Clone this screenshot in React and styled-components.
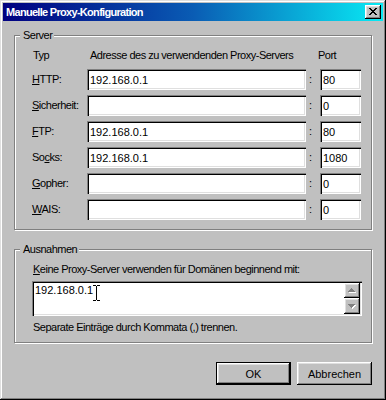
import React from "react";
import styled, { createGlobalStyle } from "styled-components";

const Global = createGlobalStyle`
  html, body { margin: 0; padding: 0; background: #c0c0c0; }
  body { font-family: "Liberation Sans", Arial, sans-serif; font-size: 11px; color: #000; letter-spacing: -0.5px; }
  * { box-sizing: border-box; }
`;

const raised = `
  box-shadow: inset -1px -1px #000, inset 1px 1px #fff, inset -2px -2px #808080, inset 2px 2px #dfdfdf;
`;

const Window = styled.div`
  width: 386px;
  height: 400px;
  padding: 3px;
  background: #c0c0c0;
  box-shadow: inset -1px -1px #000, inset 1px 1px #dfdfdf, inset -2px -2px #808080, inset 2px 2px #fff;
  display: flex;
  flex-direction: column;
`;

const TitleBar = styled.div`
  height: 18px;
  display: flex;
  align-items: center;
  justify-content: space-between;
  padding: 0 2px 0 3px;
  background: linear-gradient(90deg, #000080 0%, #0a5cb4 50%, #08eaf4 100%);
`;

const Title = styled.span`
  color: #fff;
  font-weight: bold;
  font-size: 11px;
  line-height: 13px;
  letter-spacing: -0.7px;
  white-space: nowrap;
`;

const CloseButton = styled.button`
  width: 16px;
  height: 14px;
  padding: 0 0 1px 0;
  border: none;
  background: #c0c0c0;
  display: flex;
  align-items: center;
  justify-content: center;
  ${raised}
`;

const Body = styled.div`
  padding: 14px 11px 0 11px;
  display: flex;
  flex-direction: column;
`;

const GroupBox = styled.div`
  position: relative;
  width: 358px;
  height: ${(p) => p.$h}px;
  border: 1px solid #808080;
  box-shadow: 1px 1px 0 #fff, inset 1px 1px 0 #fff;
  margin-top: ${(p) => p.$mt || 0}px;
`;

const Legend = styled.span`
  position: absolute;
  top: -7px;
  left: 5px;
  padding: 0 2px 0 3px;
  line-height: 13px;
  background: #c0c0c0;
  white-space: nowrap;
`;

const ServerGrid = styled.div`
  display: grid;
  grid-template-columns: 55px 219px 14px 41px;
  grid-template-rows: 16px repeat(6, 21px);
  row-gap: 5px;
  align-items: center;
  padding: 12px 0 0 17px;
`;

const Header = styled.span`
  align-self: start;
  line-height: 14px;
  white-space: nowrap;
  padding-left: ${(p) => p.$pl || 0}px;
  grid-column: ${(p) => p.$col || "auto"};
`;

const Label = styled.span`
  line-height: 13px;
  white-space: nowrap;
`;

const Colon = styled.span`
  padding-left: 3px;
  line-height: 13px;
`;

const Field = styled.input`
  width: 100%;
  height: 21px;
  border: none;
  outline: none;
  margin: 0;
  padding: 0 2px 0 3px;
  font: inherit;
  letter-spacing: normal;
  color: #000;
  background: #fff;
  box-shadow: inset 1px 1px #808080, inset 2px 2px #000, inset -1px -1px #fff, inset -2px -2px #dfdfdf;
`;

const ExceptBody = styled.div`
  padding: 13px 9px 0 17px;
  display: flex;
  flex-direction: column;
`;

const Text = styled.span`
  line-height: 13px;
  padding-left: 1px;
  margin-top: ${(p) => p.$mt || 0}px;
  white-space: nowrap;
`;

const TextBox = styled.div`
  position: relative;
  margin-top: 5px;
  height: 35px;
  display: flex;
  padding: 2px;
  background: #fff;
  box-shadow: inset 1px 1px #808080, inset 2px 2px #000, inset -1px -1px #fff, inset -2px -2px #dfdfdf;
`;

const TextContent = styled.div`
  flex: 1;
  padding: 1px 1px 0 1px;
  line-height: 13px;
  letter-spacing: normal;
`;

const ScrollBar = styled.div`
  width: 16px;
  display: flex;
  flex-direction: column;
`;

const ScrollButton = styled.div`
  height: ${(p) => p.$h}px;
  background: #c0c0c0;
  display: flex;
  align-items: center;
  justify-content: center;
  ${raised}
`;

const Cursor = styled.svg`
  position: absolute;
  left: 61px;
  top: 4px;
`;

const ButtonRow = styled.div`
  width: 358px;
  margin-top: 19px;
  display: flex;
  justify-content: flex-end;
  gap: 6px;
`;

const Button = styled.button`
  width: 75px;
  height: 23px;
  border: none;
  padding: 0;
  font: inherit;
  letter-spacing: normal;
  color: #000;
  background: #c0c0c0;
  ${(p) =>
    p.$default
      ? `box-shadow: inset 0 0 0 1px #000, inset -2px -2px #000, inset 2px 2px #fff, inset -3px -3px #808080, inset 3px 3px #dfdfdf;`
      : `box-shadow: inset -1px -1px #000, inset 1px 1px #fff, inset -2px -2px #808080, inset 2px 2px #dfdfdf;`}
`;

const XGlyph = () => (
  <svg width="8" height="7" viewBox="0 0 8 7" shapeRendering="crispEdges">
    <path
      fill="#000"
      d="M0 0h2v1H0zM6 0h2v1H6zM1 1h2v1H1zM5 1h2v1H5zM2 2h4v1H2zM3 3h2v1H3zM2 4h4v1H2zM1 5h2v1H1zM5 5h2v1H5zM0 6h2v1H0zM6 6h2v1H6z"
    />
  </svg>
);

const Arrow = ({ up }) => {
  const d = up
    ? "M3 0h1v1H3zM2 1h3v1H2zM1 2h5v1H1zM0 3h7v1H0z"
    : "M0 0h7v1H0zM1 1h5v1H1zM2 2h3v1H2zM3 3h1v1H3z";
  return (
    <svg width="8" height="5" viewBox="0 0 8 5" shapeRendering="crispEdges">
      <path fill="#fff" d={d} transform="translate(1 1)" />
      <path fill="#808080" d={d} />
    </svg>
  );
};

const Mn = ({ text, u }) => (
  <>
    {text.slice(0, u)}
    <u>{text[u]}</u>
    {text.slice(u + 1)}
  </>
);

const rows = [
  { label: "HTTP", u: 0, addr: "192.168.0.1", port: "80" },
  { label: "Sicherheit", u: 0, addr: "", port: "0" },
  { label: "FTP", u: 0, addr: "192.168.0.1", port: "80" },
  { label: "Socks", u: 2, addr: "192.168.0.1", port: "1080" },
  { label: "Gopher", u: 0, addr: "", port: "0" },
  { label: "WAIS", u: 0, addr: "", port: "0" },
];

export default function App() {
  return (
    <>
      <Global />
      <Window>
        <TitleBar>
          <Title>Manuelle Proxy-Konfiguration</Title>
          <CloseButton aria-label="Schließen">
            <XGlyph />
          </CloseButton>
        </TitleBar>
        <Body>
          <GroupBox $h={195}>
            <Legend>Server</Legend>
            <ServerGrid>
              <Header $pl={1}>Typ</Header>
              <Header $pl={3}>Adresse des zu verwendenden Proxy-Servers</Header>
              <Header $pl={12} $col="3 / 5">Port</Header>
              {rows.map((r) => (
                <React.Fragment key={r.label}>
                  <Label>
                    <Mn text={r.label + ":"} u={r.u} />
                  </Label>
                  <Field defaultValue={r.addr} readOnly />
                  <Colon>:</Colon>
                  <Field defaultValue={r.port} readOnly />
                </React.Fragment>
              ))}
            </ServerGrid>
          </GroupBox>
          <GroupBox $h={94} $mt={19}>
            <Legend>Ausnahmen</Legend>
            <ExceptBody>
              <Text>
                <Mn text="Keine Proxy-Server verwenden für Domänen beginnend mit:" u={0} />
              </Text>
              <TextBox>
                <TextContent>192.168.0.1</TextContent>
                <ScrollBar>
                  <ScrollButton $h={15}>
                    <Arrow up />
                  </ScrollButton>
                  <ScrollButton $h={16}>
                    <Arrow />
                  </ScrollButton>
                </ScrollBar>
                <Cursor width="7" height="16" viewBox="0 0 7 16" shapeRendering="crispEdges">
                  <path fill="#000" d="M0 0h3v1H0zM4 0h3v1H4zM3 1h1v14H3zM0 15h3v1H0zM4 15h3v1H4z" />
                </Cursor>
              </TextBox>
              <Text $mt={5}>Separate Einträge durch Kommata (,) trennen.</Text>
            </ExceptBody>
          </GroupBox>
          <ButtonRow>
            <Button $default>OK</Button>
            <Button>Abbrechen</Button>
          </ButtonRow>
        </Body>
      </Window>
    </>
  );
}
